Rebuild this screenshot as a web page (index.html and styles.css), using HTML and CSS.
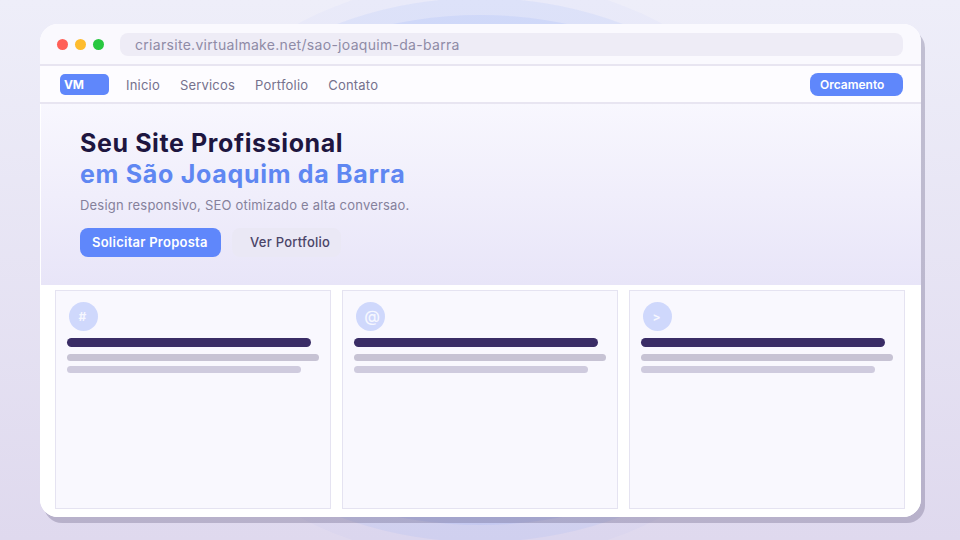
FILE: index.html
```html
<!DOCTYPE html>
<html lang="en">
<head>
    <meta charset="UTF-8">
    <meta name="viewport" content="width=device-width, initial-scale=1.0">
    <title>Criar Site - Sao Joaquim da Barra</title>
    <link rel="stylesheet" href="styles.css">
</head>
<body>
    <!-- background glow behind the window -->
    <div class="glow glow-outer"></div>
    <div class="glow glow-mid"></div>
    <div class="glow glow-inner"></div>

    <div class="window">
        <div class="titlebar">
            <span class="dot dot-red"></span>
            <span class="dot dot-yellow"></span>
            <span class="dot dot-green"></span>
            <div class="address">criarsite.virtualmake.net/sao-joaquim-da-barra</div>
        </div>

        <nav class="nav">
            <div class="logo">VM</div>
            <a>Inicio</a>
            <a>Servicos</a>
            <a>Portfolio</a>
            <a>Contato</a>
            <div class="nav-cta">Orcamento</div>
        </nav>

        <section class="hero">
            <h1>Seu Site Profissional</h1>
            <h2>em São Joaquim da Barra</h2>
            <p>Design responsivo, SEO otimizado e alta conversao.</p>
            <div class="hero-actions">
                <div class="btn btn-primary">Solicitar Proposta</div>
                <div class="btn btn-ghost">Ver Portfolio</div>
            </div>
        </section>

        <section class="cards">
            <div class="card">
                <div class="card-icon icon-small">#</div>
                <div class="bar bar-title"></div>
                <div class="bar bar-line"></div>
                <div class="bar bar-line-short"></div>
            </div>
            <div class="card">
                <div class="card-icon icon-at">@</div>
                <div class="bar bar-title"></div>
                <div class="bar bar-line"></div>
                <div class="bar bar-line-short"></div>
            </div>
            <div class="card">
                <div class="card-icon icon-small">&gt;</div>
                <div class="bar bar-title"></div>
                <div class="bar bar-line"></div>
                <div class="bar bar-line-short"></div>
            </div>
        </section>
    </div>
</body>
</html>
```

FILE: styles.css
```css
*, *::before, *::after {
    box-sizing: border-box;
}

html, body {
    height: 100%;
}

body {
    position: relative;
    margin: 0;
    padding: 24px 39px 23px 40px;
    overflow: hidden;
    font-family: 'Inter', sans-serif;
    background: linear-gradient(180deg, #eeeef9 0%, #dfd9ee 100%);
}

.glow {
    position: absolute;
    left: 50%;
    top: 50%;
    border-radius: 50%;
    transform: translate(-50%, -50%);
}

.glow-outer {
    width: 684px;
    height: 582px;
    background: rgba(95, 135, 251, 0.03);
}

.glow-mid {
    width: 670px;
    height: 544px;
    background: rgba(95, 135, 251, 0.08);
}

.glow-inner {
    width: 662px;
    height: 510px;
    background: rgba(95, 135, 251, 0.1);
}

.window {
    position: relative;
    display: flex;
    flex-direction: column;
    height: 493px;
    border-radius: 18px;
    background: #fff;
    box-shadow: 4px 6px 0 rgba(70, 60, 100, 0.26);
    overflow: hidden;
}

.titlebar {
    display: flex;
    align-items: center;
    height: 42px;
    padding: 0 18px 0 17px;
    background: #faf9fe;
    border-bottom: 2px solid #e8e5f1;
}

.dot {
    width: 11px;
    height: 11px;
    margin-right: 7px;
    border-radius: 50%;
}

.dot-red { background: #ff5f57; }
.dot-yellow { background: #febc2e; }
.dot-green { background: #28c840; }

.address {
    flex: 1;
    height: 23px;
    margin-left: 9px;
    padding-left: 15px;
    border-radius: 8px;
    background: #eeecf6;
    color: #8f8ba6;
    font-size: 14px;
    letter-spacing: 0.3px;
    line-height: 23px;
}

.nav {
    display: flex;
    align-items: center;
    gap: 20px;
    height: 38px;
    padding: 0 18px 0 20px;
    background: #fdfcff;
    border-bottom: 2px solid #e8e5f1;
    color: #75718d;
    font-size: 13px;
    letter-spacing: 0.2px;
}

.nav a {
    padding-top: 2px;
}

.logo {
    width: 49px;
    height: 21px;
    margin-right: -3px;
    padding-left: 4px;
    border-radius: 5px;
    background: #5f87fb;
    color: #fff;
    font-size: 12px;
    font-weight: 700;
    letter-spacing: -0.3px;
    line-height: 21px;
}

.nav-cta {
    width: 93px;
    height: 23px;
    margin-left: auto;
    padding-left: 10px;
    border-radius: 8px;
    background: #5f87fb;
    color: #fff;
    font-size: 12px;
    font-weight: 600;
    letter-spacing: 0;
    line-height: 23px;
}

.hero {
    height: 181px;
    margin-left: 1px;
    padding: 24px 39px 0;
    background: linear-gradient(180deg, #f8f7fe 0%, #e8e5f8 100%);
}

h1, h2 {
    margin: 0;
    font-size: 25px;
    font-weight: 700;
    line-height: 30px;
}

h1 {
    color: #1e1640;
    letter-spacing: 0.6px;
}

h2 {
    margin-top: 1px;
    color: #5f87f2;
    letter-spacing: 0.7px;
}

.hero p {
    margin: 7px 0 0;
    color: #85819b;
    font-size: 13px;
    letter-spacing: 0.2px;
    line-height: 18px;
}

.hero-actions {
    display: flex;
    gap: 11px;
    margin-top: 14px;
}

.btn {
    height: 29px;
    border-radius: 8px;
    font-size: 13px;
    font-weight: 600;
    letter-spacing: 0.25px;
    line-height: 29px;
}

.btn-primary {
    width: 141px;
    padding-left: 12px;
    background: #5f87fb;
    color: #fff;
}

.btn-ghost {
    width: 109px;
    padding-left: 18px;
    background: #eae8f5;
    color: #4a4468;
    font-weight: 500;
}

.cards {
    flex: 1;
    display: grid;
    grid-template-columns: repeat(3, 276px);
    gap: 11px;
    padding: 5px 15px 8px;
    background: #fff;
}

.card {
    padding: 11px 11px 0;
    background: #f9f8fe;
    border: 1px solid #e5e3f1;
}

.card-icon {
    width: 29px;
    height: 29px;
    margin-left: 2px;
    padding-right: 2px;
    border-radius: 50%;
    background: #cfd8fc;
    color: #f6f7ff;
    line-height: 29px;
    text-align: center;
}

.icon-small {
    font-size: 12px;
    font-weight: 700;
}

.icon-at {
    padding: 0 0 0 3px;
    font-size: 16px;
    font-weight: 500;
}

.bar {
    border-radius: 5px;
}

.bar-title {
    width: 244px;
    height: 9px;
    margin-top: 7px;
    background: #3a2d66;
}

.bar-line {
    width: 252px;
    height: 7px;
    margin-top: 7px;
    background: #c7c3d4;
}

.bar-line-short {
    width: 234px;
    height: 7px;
    margin-top: 5px;
    background: #cfcbde;
}
```
